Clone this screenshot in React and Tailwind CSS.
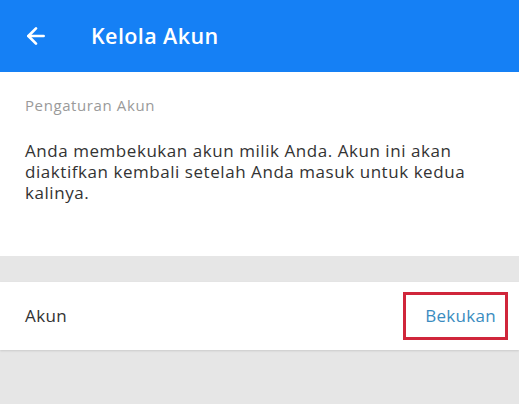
import { ArrowLeft } from 'lucide-react';

// Kelola Akun screen: header, account settings note, freeze row
const App = () => {
  return (
    <div className="w-[519px] h-[404px] bg-[#e6e6e6] flex flex-col" style={{ fontFamily: '"Open Sans", sans-serif' }}>
      {/* Header */}
      <div className="h-[72px] bg-[#1580f5] flex items-center px-[23px] shrink-0">
        <ArrowLeft size={26} strokeWidth={2.5} className="text-white" />
        <h1 className="ml-[42px] text-white text-[21.5px] font-semibold tracking-[0.4px]">Kelola Akun</h1>
      </div>

      {/* Settings note */}
      <div className="bg-white h-[184px] px-[25px] pt-[22px] shrink-0">
        <p className="text-[15px] text-[#9a9a9a] tracking-[0.6px]">Pengaturan Akun</p>
        <p className="mt-[23px] text-[17px] leading-[21px] text-[#333] tracking-[0.55px] pr-[20px]">
          Anda membekukan akun milik Anda. Akun ini akan diaktifkan kembali setelah Anda masuk untuk kedua kalinya.
        </p>
      </div>

      {/* Account row */}
      <div className="mt-[26px] bg-white h-[68px] flex items-center justify-between pl-[25px] pr-[11px] shadow-[0_1px_2px_rgba(0,0,0,0.12)] shrink-0">
        <span className="text-[17px] text-[#333] tracking-[0.4px]">Akun</span>
        <div className="w-[105px] h-[48px] border-[3px] border-[#d0263b] flex items-center justify-end pr-[9px]">
          <span className="text-[17px] text-[#3a8cc0] tracking-[0.3px]">Bekukan</span>
        </div>
      </div>
    </div>
  );
};

export default App;
